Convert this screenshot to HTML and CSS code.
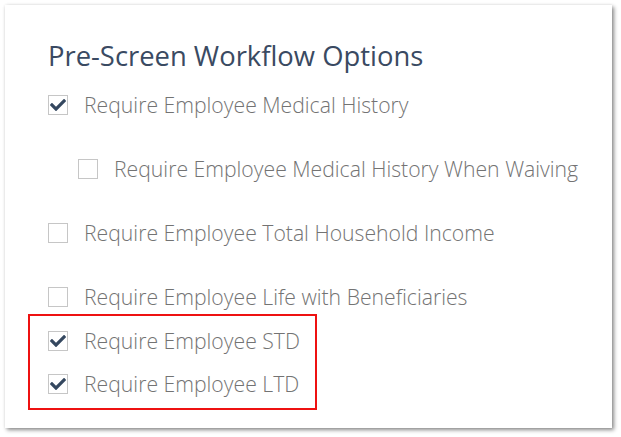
FILE: index.html
```html
<!DOCTYPE html>
<html>
<head>
<meta charset="utf-8">
<link rel="stylesheet" href="styles.css">
</head>
<body>
<div class="card">
  <h2 class="title">Pre-Screen Workflow Options</h2>
  <div class="options">
    <label class="row">
      <span class="box"><svg class="check" viewBox="0 0 512 512"><path d="M173.898 439.404l-166.4-166.4c-9.997-9.997-9.997-26.206 0-36.204l36.203-36.204c9.997-9.998 26.207-9.998 36.204 0L192 312.69 432.095 72.596c9.997-9.997 26.207-9.997 36.204 0l36.203 36.204c9.997 9.997 9.997 26.206 0 36.204l-294.4 294.401c-9.998 9.997-26.207 9.997-36.204-.001z"/></svg></span>
      <span class="text">Require Employee Medical History</span>
    </label>
    <label class="row indent">
      <span class="box"></span>
      <span class="text">Require Employee Medical History When Waiving</span>
    </label>
    <label class="row">
      <span class="box"></span>
      <span class="text">Require Employee Total Household Income</span>
    </label>
    <label class="row">
      <span class="box"></span>
      <span class="text">Require Employee Life with Beneficiaries</span>
    </label>
    <div class="highlight">
      <label class="row">
        <span class="box"><svg class="check" viewBox="0 0 512 512"><path d="M173.898 439.404l-166.4-166.4c-9.997-9.997-9.997-26.206 0-36.204l36.203-36.204c9.997-9.998 26.207-9.998 36.204 0L192 312.69 432.095 72.596c9.997-9.997 26.207-9.997 36.204 0l36.203 36.204c9.997 9.997 9.997 26.206 0 36.204l-294.4 294.401c-9.998 9.997-26.207 9.997-36.204-.001z"/></svg></span>
        <span class="text">Require Employee STD</span>
      </label>
      <label class="row">
        <span class="box"><svg class="check" viewBox="0 0 512 512"><path d="M173.898 439.404l-166.4-166.4c-9.997-9.997-9.997-26.206 0-36.204l36.203-36.204c9.997-9.998 26.207-9.998 36.204 0L192 312.69 432.095 72.596c9.997-9.997 26.207-9.997 36.204 0l36.203 36.204c9.997 9.997 9.997 26.206 0 36.204l-294.4 294.401c-9.998 9.997-26.207 9.997-36.204-.001z"/></svg></span>
        <span class="text">Require Employee LTD</span>
      </label>
    </div>
  </div>
</div>
</body>
</html>
```
FILE: styles.css
```css
html, body {
  margin: 0;
  padding: 0;
  background: #ffffff;
}
body {
  font-family: "Open Sans", "DejaVu Sans", sans-serif;
  padding: 5px 0 0 5px;
  height: 437px;
  box-sizing: border-box;
}
.card {
  box-sizing: border-box;
  width: 607px;
  height: 423px;
  background: #ffffff;
  box-shadow: 2px 2px 4px rgba(0, 0, 0, 0.45), 0 0 3px rgba(0, 0, 0, 0.08);
  padding: 32px 0 0 43px;
}
.title {
  margin: 0;
  font-size: 27.4px;
  line-height: 38px;
  font-weight: 400;
  color: #3a4a62;
}
.options {
  display: flex;
  flex-direction: column;
  gap: 32px;
  margin-top: 14px;
}
.row {
  display: flex;
  align-items: center;
  gap: 16px;
  height: 32px;
}
.row.indent {
  padding-left: 30px;
}
.box {
  box-sizing: border-box;
  width: 20px;
  height: 20px;
  border: 1px solid #c6c6c6;
  background: #fff;
  flex: none;
  display: flex;
  align-items: center;
  justify-content: center;
}
.check {
  display: block;
  width: 16px;
  height: 16px;
  fill: #34475f;
}
.text {
  font-size: 21.2px;
  font-weight: 300;
  color: #737373;
  line-height: 32px;
  white-space: nowrap;
}
.highlight {
  margin-top: -31px;
  margin-left: -20px;
  width: 289px;
  box-sizing: border-box;
  border: 2px solid #ee1111;
  padding: 9px 0 8px 18px;
  display: flex;
  flex-direction: column;
  gap: 11px;
}
```
